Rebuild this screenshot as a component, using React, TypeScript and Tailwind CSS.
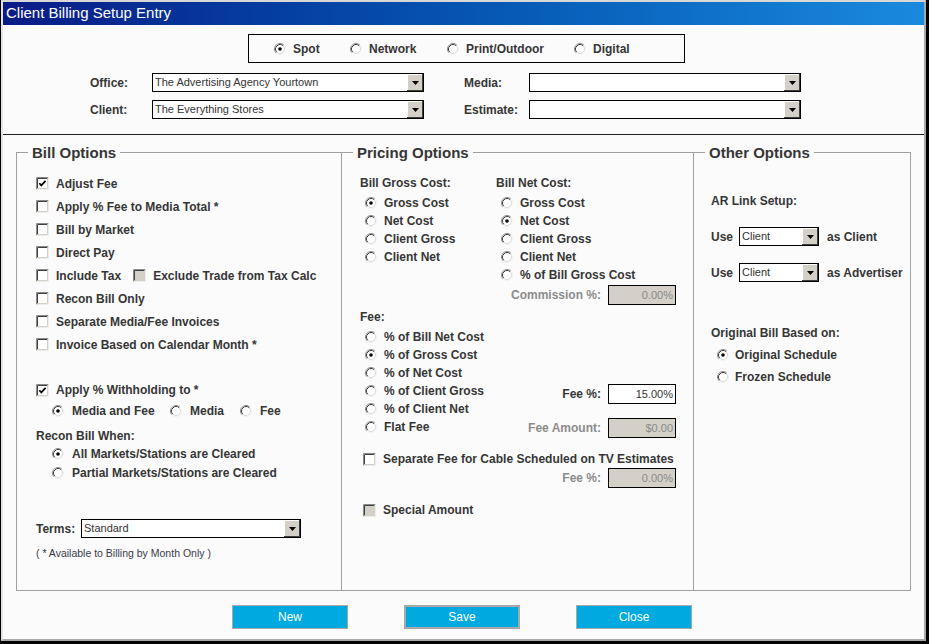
import React from "react"

// classic sunken radio button
function Radio({ on }: { on?: boolean }) {
  return (
    <svg width="12" height="12" viewBox="0 0 12 12" className="shrink-0">
      <circle cx="6" cy="6" r="4.5" fill="#fff" />
      <path d="M9.89 2.11A5.5 5.5 0 0 0 2.11 9.89" fill="none" stroke="#8a8a8a" />
      <path d="M2.11 9.89A5.5 5.5 0 0 0 9.89 2.11" fill="none" stroke="#f2f2f2" />
      <path d="M9.18 2.82A4.5 4.5 0 0 0 2.82 9.18" fill="none" stroke="#404040" />
      <path d="M2.82 9.18A4.5 4.5 0 0 0 9.18 2.82" fill="none" stroke="#dcdcdc" />
      {on && <circle cx="6" cy="6" r="1.8" fill="#000" />}
    </svg>
  )
}

function Check({ on, disabled }: { on?: boolean; disabled?: boolean }) {
  return (
    <svg width="13" height="13" viewBox="0 0 13 13" className="shrink-0">
      <rect x="1" y="1" width="11" height="11" fill={disabled ? "#d4d0c8" : "#fff"} />
      <path d="M0.5 12.5V0.5H12.5" fill="none" stroke="#8a8a8a" />
      <path d="M1.5 11.5V1.5H11.5" fill="none" stroke="#404040" />
      <path d="M0.5 12.5H12.5V0.5" fill="none" stroke="#ececec" />
      <path d="M1.5 11.5H11.5V1.5" fill="none" stroke="#d4d0c8" />
      {on && <path d="M3.3 6.2L5.3 8.4L9.6 3.8" fill="none" stroke="#000" strokeWidth="1.7" />}
    </svg>
  )
}

function Combo({ width, text }: { width: string; text?: string }) {
  return (
    <div className={`flex h-[19px] ${width} border border-black bg-white`}>
      <span className="flex-1 truncate pl-[2px] text-[11px] leading-[17px] font-normal text-[#333]">{text}</span>
      <span className="flex h-full w-[16px] items-center justify-center bg-[#d4d0c8] shadow-[inset_-1px_-1px_#404040,inset_1px_1px_#fff]">
        <svg width="7" height="4" viewBox="0 0 7 4">
          <path d="M0 0H7L3.5 4Z" fill="#000" />
        </svg>
      </span>
    </div>
  )
}

function Field({ value, disabled }: { value: string; disabled?: boolean }) {
  return (
    <div
      className={`h-[20px] w-[68px] border border-black pr-[2px] text-right text-[11px] leading-[18px] font-normal ${
        disabled ? "bg-[#d4d0c8] text-[#8a8a8a]" : "bg-white text-[#333]"
      }`}
    >
      {value}
    </div>
  )
}

function RadioRow({ label, on }: { label: string; on?: boolean }) {
  return (
    <div className="flex h-[18px] items-center gap-[7px]">
      <Radio on={on} />
      <span>{label}</span>
    </div>
  )
}

const billChecks = [
  { label: "Adjust Fee", on: true },
  { label: "Apply % Fee to Media Total *" },
  { label: "Bill by Market" },
  { label: "Direct Pay" },
  { label: "Include Tax", extra: true },
  { label: "Recon Bill Only" },
  { label: "Separate Media/Fee Invoices" },
  { label: "Invoice Based on Calendar Month *" },
]

export default function App() {
  return (
    <div className="h-[644px] w-[929px] overflow-hidden border-r-[3px] border-b-[3px] border-l border-black bg-[#fbfbfb] font-['Liberation_Sans',Arial,sans-serif] text-[12px] font-bold text-[#363636]">
      <div className="flex h-full flex-col border-t-2 border-r-2 border-b-2 border-l-2 border-t-[#d8d8d8] border-r-[#a8a8a8] border-b-[#a8a8a8] border-l-[#e4e4e4]">
        {/* title bar */}
        <div className="flex h-[23px] shrink-0 items-center bg-gradient-to-r from-[#0a1a86] to-[#1a8ade] pl-[3px] text-[15px] font-normal text-white">
          Client Billing Setup Entry
        </div>

        {/* media type */}
        <div className="mt-[9px] ml-[245px] flex h-[29px] w-[437px] items-center border border-black pl-[25px]">
          <div className="flex w-[76px] items-center gap-[7px]">
            <Radio on />
            <span>Spot</span>
          </div>
          <div className="flex w-[97px] items-center gap-[7px]">
            <Radio />
            <span>Network</span>
          </div>
          <div className="flex w-[127px] items-center gap-[7px]">
            <Radio />
            <span>Print/Outdoor</span>
          </div>
          <div className="flex items-center gap-[7px]">
            <Radio />
            <span>Digital</span>
          </div>
        </div>

        <div className="mt-[10px] flex h-[19px] items-center pl-[87px]">
          <span className="w-[62px]">Office:</span>
          <Combo width="w-[272px]" text="The Advertising Agency Yourtown" />
          <span className="ml-[40px] w-[65px]">Media:</span>
          <Combo width="w-[272px]" />
        </div>
        <div className="mt-[8px] flex h-[19px] items-center pl-[87px]">
          <span className="w-[62px]">Client:</span>
          <Combo width="w-[272px]" text="The Everything Stores" />
          <span className="ml-[40px] w-[65px]">Estimate:</span>
          <Combo width="w-[272px]" />
        </div>

        <div className="mt-[15px] h-px shrink-0 bg-[#222]" />

        {/* option groups */}
        <div className="mt-[9px] ml-[13px] flex">
          <fieldset className="h-[447px] w-[325px] border border-r-0 border-[#a0a0a0]">
            <legend className="ml-[11px] px-[4px] text-[15px] leading-[17px]">Bill Options</legend>
            <div className="pt-[11px] pl-[19px]">
              {billChecks.map((c) => (
                <div key={c.label} className="flex h-[23px] items-center gap-[7px]">
                  <Check on={c.on} />
                  <span>{c.label}</span>
                  {c.extra && (
                    <>
                      <span className="ml-[5px]">
                        <Check disabled />
                      </span>
                      <span>Exclude Trade from Tax Calc</span>
                    </>
                  )}
                </div>
              ))}
              <div className="h-[23px]" />
              <div className="flex h-[22px] items-center gap-[7px]">
                <Check on />
                <span>Apply % Withholding to *</span>
              </div>
              <div className="flex h-[19px] items-center pl-[16px]">
                <div className="flex w-[118px] items-center gap-[8px]">
                  <Radio on />
                  <span>Media and Fee</span>
                </div>
                <div className="flex w-[70px] items-center gap-[8px]">
                  <Radio />
                  <span>Media</span>
                </div>
                <div className="flex items-center gap-[8px]">
                  <Radio />
                  <span>Fee</span>
                </div>
              </div>
              <div className="mt-[7px] flex h-[18px] items-center">Recon Bill When:</div>
              <div className="pl-[16px]">
                <div className="flex h-[18px] items-center gap-[8px]">
                  <Radio on />
                  <span>All Markets/Stations are Cleared</span>
                </div>
                <div className="flex h-[19px] items-center gap-[8px]">
                  <Radio />
                  <span>Partial Markets/Stations are Cleared</span>
                </div>
              </div>
              <div className="mt-[37px] flex h-[19px] items-center">
                <span className="w-[45px]">Terms:</span>
                <Combo width="w-[220px]" text="Standard" />
              </div>
              <div className="mt-[9px] flex h-[14px] items-center text-[10.5px] font-normal text-[#3a3a4a]">
                ( * Available to Billing by Month Only )
              </div>
            </div>
          </fieldset>

          <fieldset className="h-[447px] w-[352px] border border-r-0 border-[#a0a0a0]">
            <legend className="ml-[11px] px-[4px] text-[15px] leading-[17px]">Pricing Options</legend>
            <div className="pt-[12px] pr-[17px] pl-[18px]">
              <div className="flex">
                <div className="w-[136px]">
                  <div className="flex h-[20px] items-center">Bill Gross Cost:</div>
                  <div className="mt-[1px] pl-[5px]">
                    <RadioRow label="Gross Cost" on />
                    <RadioRow label="Net Cost" />
                    <RadioRow label="Client Gross" />
                    <RadioRow label="Client Net" />
                  </div>
                </div>
                <div>
                  <div className="flex h-[20px] items-center">Bill Net Cost:</div>
                  <div className="mt-[1px] pl-[5px]">
                    <RadioRow label="Gross Cost" />
                    <RadioRow label="Net Cost" on />
                    <RadioRow label="Client Gross" />
                    <RadioRow label="Client Net" />
                    <RadioRow label="% of Bill Gross Cost" />
                  </div>
                </div>
              </div>
              <div className="mt-[1px] flex h-[20px] items-center justify-end">
                <span className="mr-[7px] text-[#8c8c8c]">Commission %:</span>
                <Field value="0.00%" disabled />
              </div>
              <div className="mt-[3px] flex h-[18px] items-center">Fee:</div>
              <div className="mt-[2px] flex justify-between">
                <div className="pl-[5px]">
                  <RadioRow label="% of Bill Net Cost" />
                  <RadioRow label="% of Gross Cost" on />
                  <RadioRow label="% of Net Cost" />
                  <RadioRow label="% of Client Gross" />
                  <RadioRow label="% of Client Net" />
                  <RadioRow label="Flat Fee" />
                </div>
                <div className="flex flex-col items-end">
                  <div className="mt-[56px] flex items-center">
                    <span className="mr-[7px]">Fee %:</span>
                    <Field value="15.00%" />
                  </div>
                  <div className="mt-[14px] flex items-center">
                    <span className="mr-[7px] text-[#8c8c8c]">Fee Amount:</span>
                    <Field value="$0.00" disabled />
                  </div>
                </div>
              </div>
              <div className="mt-[12px] flex h-[18px] items-center gap-[7px] pl-[3px]">
                <Check />
                <span>Separate Fee for Cable Scheduled on TV Estimates</span>
              </div>
              <div className="flex h-[20px] items-center justify-end">
                <span className="mr-[7px] text-[#8c8c8c]">Fee %:</span>
                <Field value="0.00%" disabled />
              </div>
              <div className="mt-[13px] flex h-[18px] items-center gap-[7px] pl-[3px]">
                <Check disabled />
                <span>Special Amount</span>
              </div>
            </div>
          </fieldset>

          <fieldset className="h-[447px] w-[218px] border border-[#a0a0a0]">
            <legend className="ml-[11px] px-[4px] text-[15px] leading-[17px]">Other Options</legend>
            <div className="pt-[31px] pl-[17px]">
              <div className="flex h-[18px] items-center">AR Link Setup:</div>
              <div className="mt-[17px] flex h-[19px] items-center">
                <span className="w-[28px]">Use</span>
                <Combo width="w-[80px]" text="Client" />
                <span className="ml-[8px]">as Client</span>
              </div>
              <div className="mt-[17px] flex h-[19px] items-center">
                <span className="w-[28px]">Use</span>
                <Combo width="w-[80px]" text="Client" />
                <span className="ml-[8px]">as Advertiser</span>
              </div>
              <div className="mt-[42px] flex h-[18px] items-center">Original Bill Based on:</div>
              <div className="mt-[2px] pl-[6px]">
                <div className="flex h-[22px] items-center gap-[6px]">
                  <Radio on />
                  <span>Original Schedule</span>
                </div>
                <div className="flex h-[22px] items-center gap-[6px]">
                  <Radio />
                  <span>Frozen Schedule</span>
                </div>
              </div>
            </div>
          </fieldset>
        </div>

        {/* buttons */}
        <div className="mt-[14px] ml-[229px] flex gap-[56px] text-[12px] font-normal text-white">
          <button className="h-[24px] w-[116px] border border-[#a8a8a8] bg-[#00a9e0]">New</button>
          <button className="h-[24px] w-[116px] border-2 border-[#a8a8a8] bg-[#00a9e0]">Save</button>
          <button className="h-[24px] w-[116px] border border-[#a8a8a8] bg-[#00a9e0]">Close</button>
        </div>
      </div>
    </div>
  )
}
